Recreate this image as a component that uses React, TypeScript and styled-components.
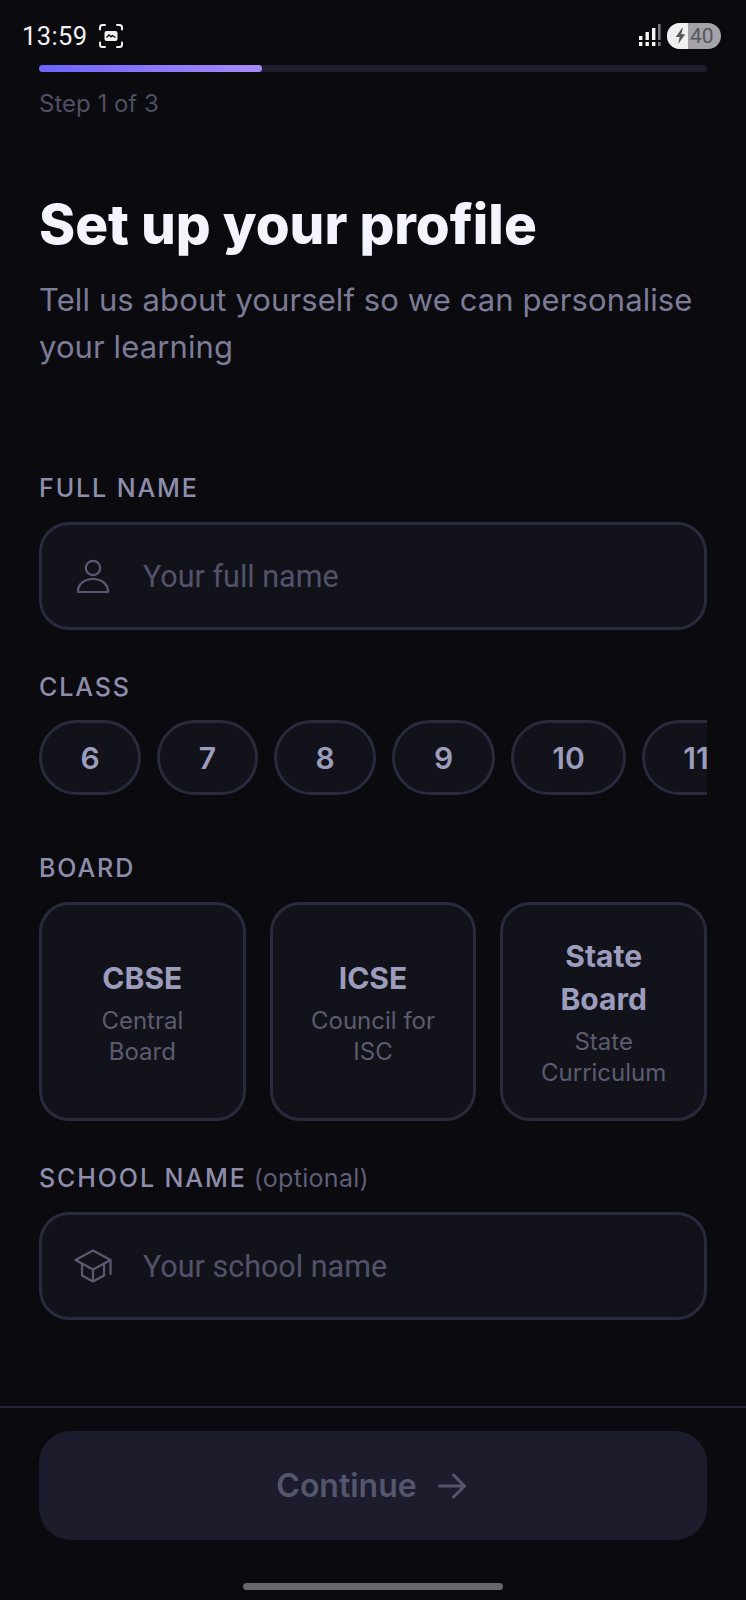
import React from "react";
import styled, { createGlobalStyle } from "styled-components";

const Global = createGlobalStyle`
  html, body { margin: 0; padding: 0; background: #0a0a0f; }
  * { box-sizing: border-box; }
  input::placeholder { color: #52526a; opacity: 1; }
`;

const Screen = styled.div`
  width: 746px;
  height: 1600px;
  background: #0a0a0f;
  display: flex;
  flex-direction: column;
  overflow: hidden;
  font-family: Inter, "Liberation Sans", sans-serif;
`;

const StatusBar = styled.div`
  height: 65px;
  padding: 22px 25px 0 22px;
  display: flex;
  justify-content: space-between;
  align-items: flex-start;
`;

const TimeGroup = styled.div`
  display: flex;
  align-items: center;
  gap: 10px;
  height: 28px;
`;

const SystemGroup = styled.div`
  display: flex;
  align-items: center;
  gap: 6px;
  height: 28px;
`;

const Clock = styled.span`
  color: #f2f2f2;
  font-family: Roboto, sans-serif;
  font-size: 25.5px;
  letter-spacing: 0.4px;
  line-height: 28px;
`;

const Battery = styled.div`
  width: 54px;
  height: 26px;
  border-radius: 13px;
  overflow: hidden;
  display: flex;
  align-items: center;
  background: #a3a3a8;
`;

const BatteryFill = styled.div`
  width: 21px;
  height: 26px;
  padding-right: 2px;
  background: #efeff1;
  display: flex;
  align-items: center;
  justify-content: flex-end;
  flex: none;
`;

const BatteryText = styled.span`
  font-family: Roboto, sans-serif;
  font-size: 21px;
  color: #55555c;
  margin-left: 2px;
  line-height: 26px;
`;

const Content = styled.div`
  padding: 0 39px;
  display: flex;
  flex-direction: column;
`;

const Track = styled.div`
  height: 7px;
  border-radius: 4px;
  background: #1e1e2e;
`;

const Progress = styled.div`
  height: 7px;
  width: 223px;
  border-radius: 4px;
  background: linear-gradient(90deg, #6c63ff, #a78bfa);
`;

const StepText = styled.div`
  margin-top: 17px;
  font-size: 24px;
  line-height: 30px;
  color: #4f4f63;
`;

const Title = styled.h1`
  margin: 71px 0 0;
  font-family: Inter, sans-serif;
  font-size: 54.8px;
  font-weight: 800;
  line-height: 68px;
  color: #f4f4ff;
`;

const Subtitle = styled.p`
  margin: 18px 0 0;
  font-size: 31px;
  line-height: 47px;
  letter-spacing: 0.1px;
  color: #7c7c96;
`;

const Form = styled.div`
  margin-top: 103px;
  display: flex;
  flex-direction: column;
  gap: 42px;
`;

const Field = styled.div<{ $gap?: number }>`
  display: flex;
  flex-direction: column;
  gap: ${(p) => p.$gap ?? 19}px;
`;

const Label = styled.div`
  font-size: 25px;
  line-height: 30px;
  font-weight: 500;
  letter-spacing: 1.9px;
  color: #8e8eac;
`;

const Optional = styled.span`
  font-size: 25px;
  font-weight: 400;
  letter-spacing: 0.3px;
  color: #5f5f78;
  margin-left: 7px;
`;

const InputBox = styled.div`
  height: 108px;
  border: 3px solid #2a2a3e;
  border-radius: 30px;
  background: #12121a;
  display: flex;
  align-items: center;
  padding-left: 32px;
  gap: 31px;
`;

const IconSlot = styled.span`
  width: 38px;
  display: flex;
  justify-content: center;
  flex: none;
`;

const TextInput = styled.input`
  flex: 1;
  min-width: 0;
  border: 0;
  outline: 0;
  background: transparent;
  font-family: Roboto, sans-serif;
  font-size: 30.5px;
  color: #e0e0f0;
  padding: 0;
`;

const ChipRow = styled.div`
  display: flex;
  gap: 16px;
  overflow: hidden;
  padding-bottom: 16px;
`;

const Chip = styled.div<{ $width: number }>`
  flex: none;
  width: ${(p) => p.$width}px;
  height: 75px;
  border: 3px solid #2a2a3e;
  border-radius: 38px;
  background: #12121a;
  display: flex;
  align-items: center;
  justify-content: center;
  font-size: 30px;
  font-weight: 600;
  color: #9c9cbc;
`;

const BoardGrid = styled.div`
  display: grid;
  grid-template-columns: repeat(3, 1fr);
  gap: 24px;
`;

const BoardCard = styled.div`
  height: 219px;
  border: 3px solid #2a2a3e;
  border-radius: 30px;
  background: #12121a;
  display: flex;
  flex-direction: column;
  align-items: center;
  justify-content: center;
  text-align: center;
  padding: 0 24px;
`;

const BoardName = styled.div`
  font-size: 30px;
  line-height: 43px;
  font-weight: 700;
  color: #9c9cbc;
`;

const BoardDesc = styled.div`
  margin-top: 5px;
  font-size: 24px;
  line-height: 31px;
  color: #5c5c70;
`;

const Footer = styled.div`
  margin-top: auto;
  border-top: 2px solid #26263a;
  padding: 23px 39px 0;
  height: 194px;
  display: flex;
  flex-direction: column;
  align-items: center;
`;

const ContinueButton = styled.button`
  width: 100%;
  height: 109px;
  border: 0;
  border-radius: 32px;
  background: #1c1c2c;
  padding: 0 4px 0 0;
  display: flex;
  align-items: center;
  justify-content: center;
  gap: 21px;
  font-family: Inter, sans-serif;
  font-size: 32px;
  font-weight: 600;
  color: #55556e;
`;

const HomeBar = styled.div`
  margin-top: 43px;
  width: 260px;
  height: 7px;
  border-radius: 4px;
  background: #66666c;
`;

const classes = [
  { n: "6", w: 102 },
  { n: "7", w: 101 },
  { n: "8", w: 102 },
  { n: "9", w: 103 },
  { n: "10", w: 115 },
  { n: "11", w: 108 },
];

const boards = [
  { name: "CBSE", desc: "Central Board" },
  { name: "ICSE", desc: "Council for ISC" },
  { name: "State Board", desc: "State Curriculum" },
];

const ScreenshotIcon = () => (
  <svg width="26" height="26" viewBox="0 0 26 26" fill="none">
    <path
      d="M2 6.5V4.5A2.5 2.5 0 0 1 4.5 2H7M19 2h2.5A2.5 2.5 0 0 1 24 4.5V6.5M24 19.500v2A2.500 2.500 0 0 1 21.500 24H19M7 24H4.500A2.500 2.500 0 0 1 2 21.500v-2"
      stroke="#f2f2f2"
      strokeWidth="2"
      strokeLinecap="round"
    />
    <rect x="6.500" y="8" width="13" height="10" rx="2" fill="#f2f2f2" />
    <path d="M8.500 14.500l2.500-2.500 2 1.800 1.500-1.300 3 2" stroke="#0a0a0f" strokeWidth="1.300" fill="none" />
  </svg>
);

const SignalIcon = () => (
  <svg width="22" height="24" viewBox="0 0 22 24">
    <g fill="#f4f4f4">
      <rect x="0" y="12" width="3.400" height="4" />
      <rect x="0" y="18" width="3.400" height="4" />
      <rect x="6.500" y="8" width="3.400" height="8" />
      <rect x="6.500" y="18" width="3.400" height="4" />
      <rect x="13" y="4" width="3.400" height="12" />
      <rect x="13" y="18" width="3.400" height="4" />
    </g>
    <g fill="#77777c">
      <rect x="19" y="0" width="2.600" height="16" />
      <rect x="19" y="18" width="2.600" height="4" />
    </g>
  </svg>
);

const BoltIcon = () => (
  <svg width="11" height="16" viewBox="0 0 14 18" preserveAspectRatio="none">
    <path d="M9 0L1 10h5l-2 8 9-11H8l2-7z" fill="#55555c" />
  </svg>
);

const UserIcon = () => (
  <svg width="36" height="36" viewBox="0 0 36 36" fill="none" stroke="#5a5a72" strokeWidth="2.200">
    <circle cx="18" cy="10" r="7.200" />
    <path d="M3 33.500c0-7.500 6.500-12.500 15-12.500s15 5 15 12.500c0 .4-.2.5-.5.5h-29c-.3 0-.5-.1-.5-.5z" />
  </svg>
);

const CapIcon = () => (
  <svg width="38" height="34" viewBox="0 0 38 34" fill="none" stroke="#5a5a72" strokeWidth="2.200" strokeLinejoin="round">
    <path d="M19 1.500L1.500 11 19 20.500 36.500 11z" />
    <path d="M8 15v11.500L19 32.500l11-6V15" />
    <path d="M19 20.500v12" />
    <path d="M36.500 11v14" strokeLinecap="round" />
  </svg>
);

const ArrowIcon = () => (
  <svg width="28" height="26" viewBox="0 0 28 26" fill="none" stroke="#55556e" strokeWidth="3" strokeLinecap="round" strokeLinejoin="round">
    <path d="M1.500 13h25M15.500 2l11 11-11 11" />
  </svg>
);

export default function App() {
  return (
    <Screen>
      <Global />
      <StatusBar>
        <TimeGroup>
          <Clock>13:59</Clock>
          <ScreenshotIcon />
        </TimeGroup>
        <SystemGroup>
          <SignalIcon />
          <Battery>
            <BatteryFill>
              <BoltIcon />
            </BatteryFill>
            <BatteryText>40</BatteryText>
          </Battery>
        </SystemGroup>
      </StatusBar>
      <Content>
        <Track>
          <Progress />
        </Track>
        <StepText>Step 1 of 3</StepText>
        <Title>Set up your profile</Title>
        <Subtitle>Tell us about yourself so we can personalise your learning</Subtitle>
        <Form>
          <Field>
            <Label>FULL NAME</Label>
            <InputBox>
              <IconSlot>
                <UserIcon />
              </IconSlot>
              <TextInput placeholder="Your full name" />
            </InputBox>
          </Field>
          <Field $gap={18}>
            <Label>CLASS</Label>
            <ChipRow>
              {classes.map((c) => (
                <Chip key={c.n} $width={c.w}>
                  {c.n}
                </Chip>
              ))}
            </ChipRow>
          </Field>
          <Field>
            <Label>BOARD</Label>
            <BoardGrid>
              {boards.map((b) => (
                <BoardCard key={b.name}>
                  <BoardName>{b.name}</BoardName>
                  <BoardDesc>{b.desc}</BoardDesc>
                </BoardCard>
              ))}
            </BoardGrid>
          </Field>
          <Field>
            <Label>
              SCHOOL NAME<Optional>(optional)</Optional>
            </Label>
            <InputBox>
              <IconSlot>
                <CapIcon />
              </IconSlot>
              <TextInput placeholder="Your school name" />
            </InputBox>
          </Field>
        </Form>
      </Content>
      <Footer>
        <ContinueButton>
          Continue
          <ArrowIcon />
        </ContinueButton>
        <HomeBar />
      </Footer>
    </Screen>
  );
}
